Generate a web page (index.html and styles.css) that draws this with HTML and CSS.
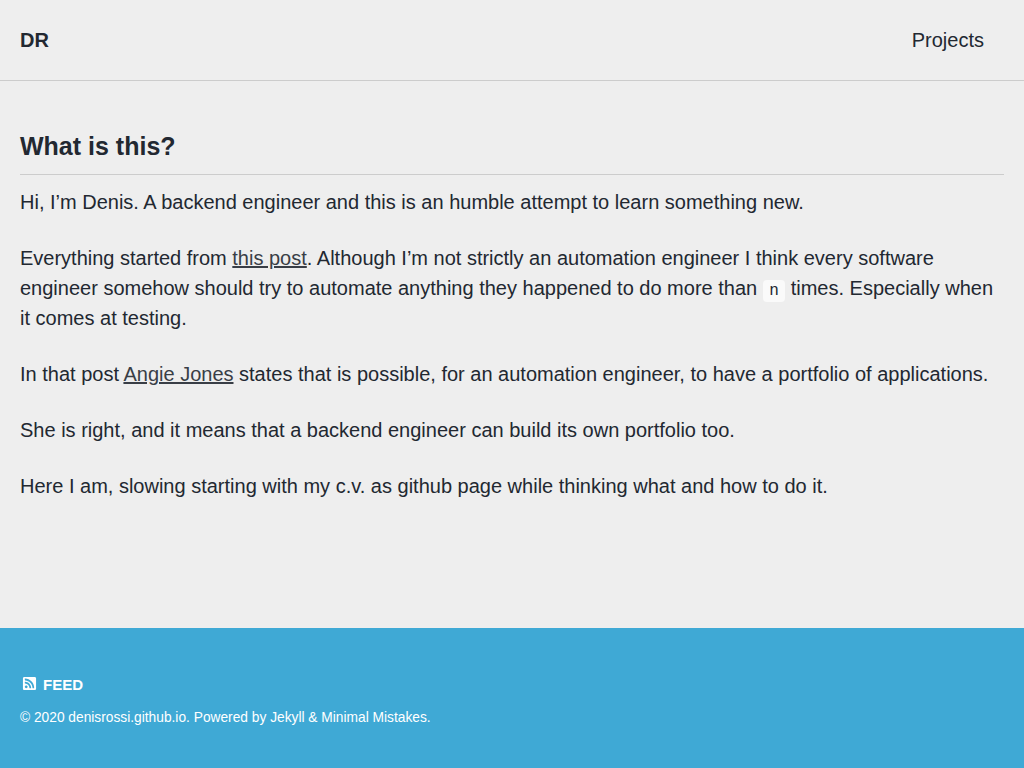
FILE: index.html
```html
<!DOCTYPE html>
<html lang="en">
<head>
<meta charset="utf-8">
<title>DR</title>
<link rel="stylesheet" href="styles.css">
</head>
<body>
<header class="masthead">
  <a class="site-title" href="#">DR</a>
  <nav><a class="nav-link" href="#">Projects</a></nav>
</header>
<main class="content">
  <h2 class="heading">What is this?</h2>
  <p>Hi, I’m Denis. A backend engineer and this is an humble attempt to learn something new.</p>
  <p>Everything started from <a href="#">this post</a>. Although I’m not strictly an automation engineer I think every software engineer somehow should try to automate anything they happened to do more than <code>n</code> times. Especially when it comes at testing.</p>
  <p>In that post <a href="#">Angie Jones</a> states that is possible, for an automation engineer, to have a portfolio of applications.</p>
  <p>She is right, and it means that a backend engineer can build its own portfolio too.</p>
  <p>Here I am, slowing starting with my c.v. as github page while thinking what and how to do it.</p>
</main>
<footer class="footer">
  <a class="feed" href="#"><svg class="feed-icon" viewBox="0 0 448 512" aria-hidden="true"><path fill="currentColor" d="M400 32H48C21.490 32 0 53.490 0 80v352c0 26.510 21.490 48 48 48h352c26.510 0 48-21.490 48-48V80c0-26.510-21.490-48-48-48zM112 416c-26.510 0-48-21.490-48-48s21.490-48 48-48 48 21.490 48 48-21.490 48-48 48zm157.533 0h-34.335c-6.011 0-11.051-4.636-11.442-10.634-5.214-80.050-69.243-143.920-149.123-149.123-5.997-.39-10.633-5.431-10.633-11.441v-34.335c0-6.535 5.468-11.777 11.994-11.425 110.546 5.974 198.997 94.536 204.964 204.964.352 6.526-4.890 11.994-11.425 11.994zm103.027 0h-34.334c-6.161 0-11.175-4.882-11.427-11.038-5.598-136.535-115.204-246.161-251.760-251.760C68.882 142.949 64 137.935 64 131.774V97.440c0-6.454 5.338-11.664 11.787-11.432 167.830 6.025 302.210 141.191 308.205 308.205.232 6.449-4.978 11.787-11.432 11.787z"/></svg><span>Feed</span></a>
  <div class="copyright">© 2020 denisrossi.github.io. Powered by <a href="#">Jekyll</a> &amp; <a href="#">Minimal Mistakes</a>.</div>
</footer>
</body>
</html>
```
FILE: styles.css
```css
* { box-sizing: border-box; }
body {
  margin: 0;
  min-height: 100vh;
  display: flex;
  flex-direction: column;
  background: #eee;
  color: #222831;
  font: 20px/30px "Liberation Sans", Arial, sans-serif;
}
.masthead {
  display: flex;
  justify-content: space-between;
  align-items: center;
  height: 81px;
  padding: 0 40px 0 20px;
  border-bottom: 1px solid #ccc;
}
.site-title { font-weight: bold; color: inherit; text-decoration: none; }
.nav-link { color: inherit; text-decoration: none; }
.content { flex: 1; padding: 50px 20px 0; }
.heading {
  margin: 0 0 12px;
  padding-bottom: 12px;
  border-bottom: 1px solid #ccc;
  font-size: 25px;
  line-height: 31px;
}
.content p { margin: 0 0 26px; }
.content a { color: #393e46; }
.content code {
  padding: 2px 0;
  border-radius: 4px;
  background: #fafafa;
  font: 16px/1 "Liberation Mono", monospace;
}
.content code::before,
.content code::after {
  content: "\00a0";
  letter-spacing: -0.2em;
}
.footer {
  height: 140px;
  padding: 42px 20px 0;
  background: #3fa9d5;
  color: #fff;
}
.footer a { color: inherit; text-decoration: none; }
.feed {
  display: flex;
  align-items: center;
  height: 30px;
  font-size: 15px;
  font-weight: bold;
  text-transform: uppercase;
}
.feed-icon { width: 19px; height: 15px; margin: 0 4px 4px 0; }
.copyright { padding-top: 1px; font-size: 13.75px; line-height: 34px; }
```
